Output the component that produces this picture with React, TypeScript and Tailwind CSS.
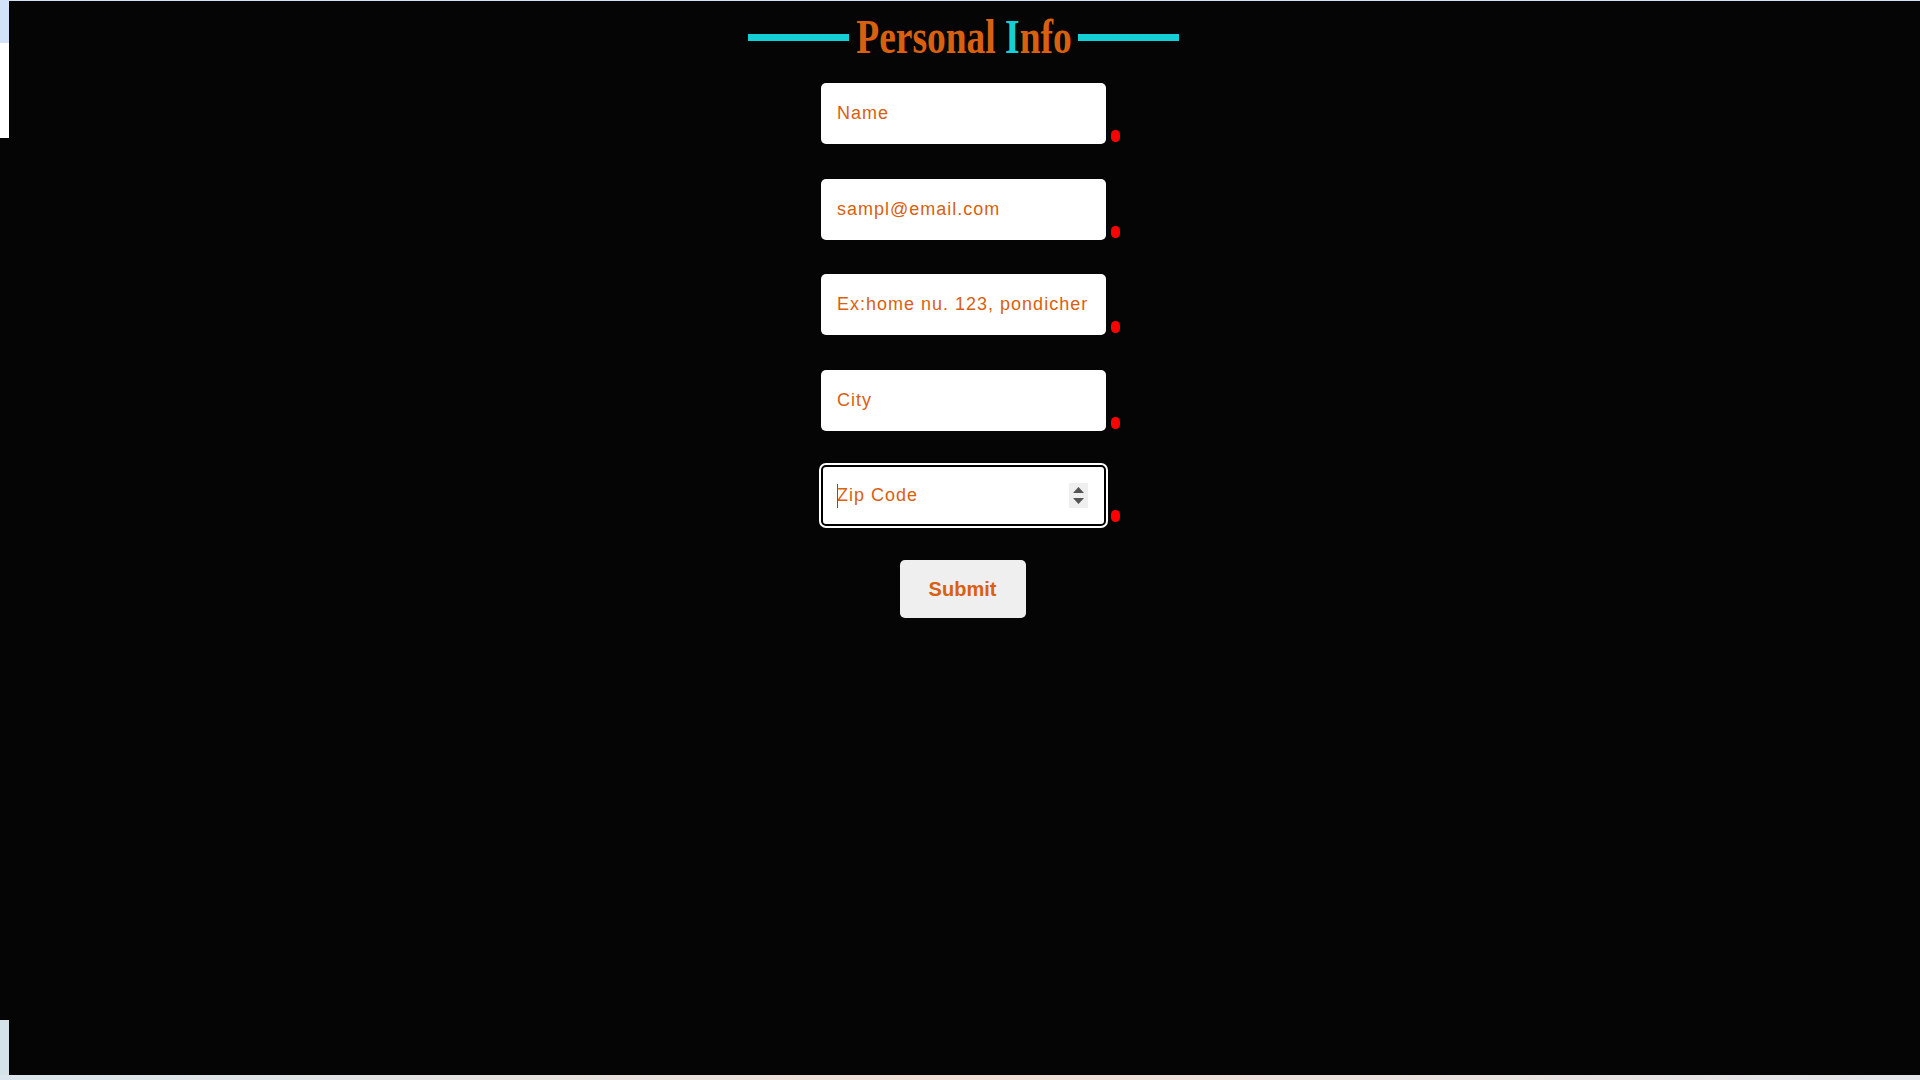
import { useState } from 'react';

const fields = [
  { id: 'name', type: 'text', placeholder: 'Name' },
  { id: 'email', type: 'email', placeholder: 'sampl@email.com' },
  { id: 'address', type: 'text', placeholder: 'Ex:home nu. 123, pondicherry' },
  { id: 'city', type: 'text', placeholder: 'City' },
];

function RequiredDot({ bottom = 'bottom-[2px]' }: { bottom?: string }) {
  return (
    <span className={`absolute left-[calc(100%+5px)] ${bottom} w-[9px] h-[12px] rounded-full bg-[#ff0000]`} />
  );
}

export default function App() {
  const [values, setValues] = useState<Record<string, string>>({});

  const update = (id: string, v: string) => setValues((prev) => ({ ...prev, [id]: v }));

  return (
    <div className="h-screen w-full flex flex-col overflow-hidden bg-[#050505] font-['Liberation_Sans',Arial,sans-serif]">
      {/* desktop edge */}
      <div className="h-px shrink-0 bg-[#d3e1f6]" />

      <div className="flex-1 flex min-h-0">
        <div className="w-[9px] shrink-0 flex flex-col">
          <div className="h-[42px] bg-[#d2e2f8]" />
          <div className="h-[95px] bg-white" />
          <div className="flex-1 bg-[#050505]" />
          <div className="h-[55px] bg-[#d5e3e9]" />
        </div>

        {/* Main */}
        <main className="flex-1 flex flex-col items-center pt-3 pr-[2px]">
          <div className="flex items-center gap-[7px]">
            <span className="w-[101px] h-[7px] bg-[#14d0d6]" />
            <h1 className="w-[215px] flex justify-center">
              <span className="inline-block shrink-0 whitespace-nowrap scale-x-[0.78] font-['Liberation_Serif','Times_New_Roman',serif] font-bold text-[48px] leading-[48px] text-[#d9600f]">
                Personal <span className="text-[#14d0d6]">I</span>nfo
              </span>
            </h1>
            <span className="w-[101px] h-[7px] bg-[#14d0d6]" />
          </div>

          <form className="mt-[22px] flex flex-col items-center gap-[34.5px]" onSubmit={(e) => e.preventDefault()}>
            {fields.map((f) => (
              <div key={f.id} className="relative">
                <input
                  type={f.type}
                  placeholder={f.placeholder}
                  value={values[f.id] ?? ''}
                  onChange={(e) => update(f.id, e.target.value)}
                  className="block w-[285px] h-[61px] rounded-[5px] bg-white pl-4 pr-[18px] text-[18px] tracking-[1px] text-[#d9600f] placeholder:text-[#d9600f] outline-none"
                />
                <RequiredDot />
              </div>
            ))}

            {/* Zip code, shown focused */}
            <div className="relative">
              <input
                type="text"
                inputMode="numeric"
                placeholder="Zip Code"
                value={values.zip ?? ''}
                onChange={(e) => update('zip', e.target.value)}
                className="block w-[285px] h-[61px] rounded-[5px] bg-white border-2 border-black shadow-[0_0_0_2px_#ffffff] pl-[14px] pr-10 text-[18px] tracking-[1px] text-[#d9600f] placeholder:text-[#d9600f] outline-none caret-transparent"
              />
              <span className="absolute left-[16px] top-[19px] w-px h-[24px] bg-[#1b6f86]" />
              <span className="absolute right-[18px] top-[18px] w-[19px] h-[25px] bg-[#efefef]">
                <svg width="19" height="25" viewBox="0 0 19 25">
                  <polygon points="4,10 15,10 9.5,4" fill="#555555" />
                  <polygon points="4,15 15,15 9.5,21" fill="#555555" />
                </svg>
              </span>
              <RequiredDot bottom="bottom-[4px]" />
            </div>

            <button
              type="submit"
              className="w-[126px] h-[58px] -mt-px -translate-x-px rounded-[5px] bg-[#efefef] text-[20px] font-bold text-[#d9600f]"
            >
              Submit
            </button>
          </form>
        </main>
      </div>

      <div className="h-[5px] shrink-0 bg-gradient-to-r from-[#dae6ec] via-[#f0dfd6] to-[#e4e6ea]" />
    </div>
  );
}
